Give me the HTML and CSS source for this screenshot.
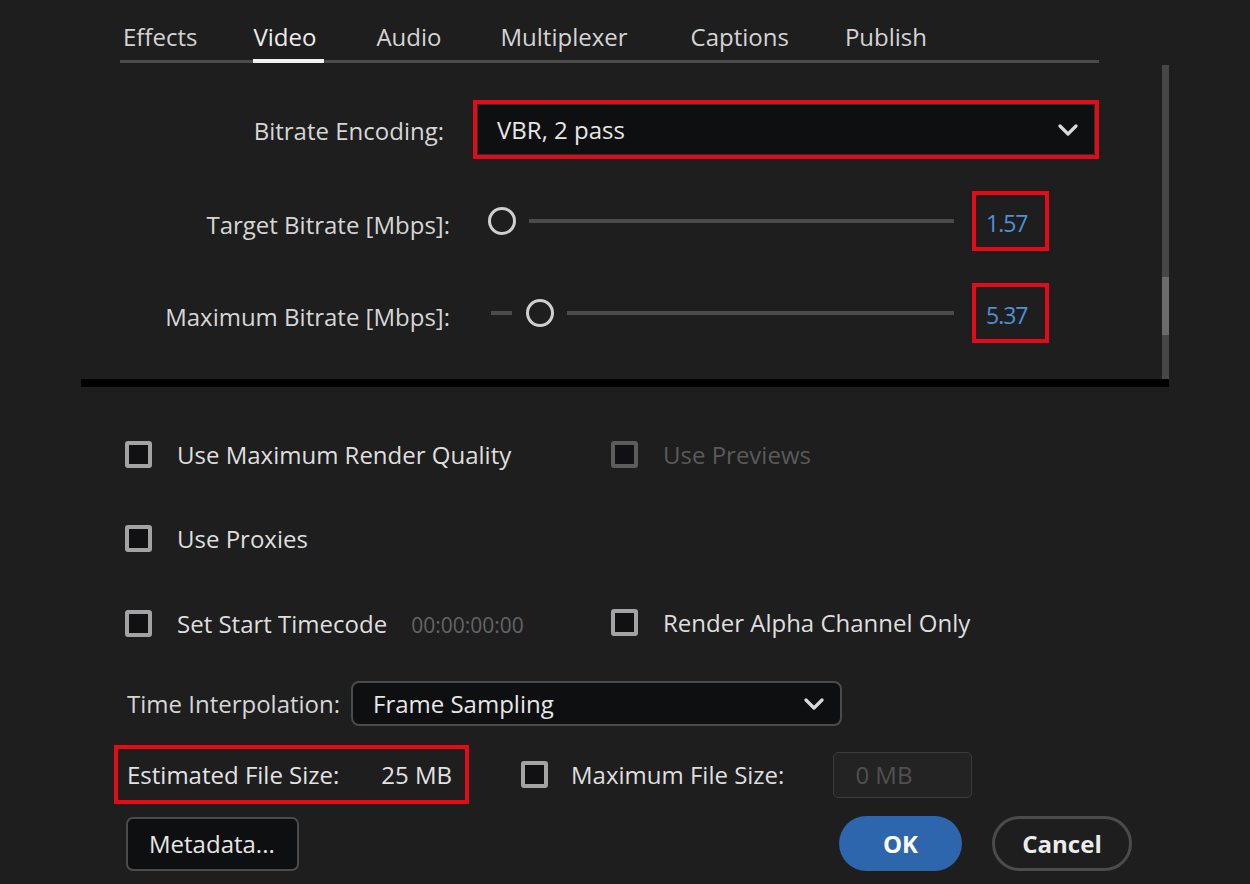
FILE: index.html
```html
<!DOCTYPE html>
<html lang="en">
<head>
<meta charset="utf-8">
<title>Export Settings - Video</title>
<link rel="stylesheet" href="styles.css">
</head>
<body>
<div class="dialog">
  <nav class="tabs">
    <span class="tab">Effects</span>
    <span class="tab active">Video</span>
    <span class="tab">Audio</span>
    <span class="tab">Multiplexer</span>
    <span class="tab">Captions</span>
    <span class="tab">Publish</span>
  </nav>

  <section class="panel">
    <div class="panel-body">
      <div class="row row-enc">
        <span class="lbl lbl-enc">Bitrate Encoding:</span>
        <div class="hl hl-enc">
          <div class="select select-enc">
            <span>VBR, 2 pass</span>
            <svg class="chev" width="20" height="12" viewBox="0 0 20 12"><polyline points="2,2 10,10 18,2" fill="none" stroke="#d9d9d9" stroke-width="3.2" stroke-linecap="round" stroke-linejoin="round"/></svg>
          </div>
        </div>
      </div>

      <div class="row row-slider">
        <span class="lbl">Target Bitrate [Mbps]:</span>
        <div class="slider">
          <span class="knob"></span>
          <span class="track"></span>
        </div>
        <div class="hl hl-val"><span class="val">1.57</span></div>
      </div>

      <div class="row row-slider">
        <span class="lbl">Maximum Bitrate [Mbps]:</span>
        <div class="slider slider-max">
          <span class="track track-left"></span>
          <span class="knob"></span>
          <span class="track"></span>
        </div>
        <div class="hl hl-val"><span class="val">5.37</span></div>
      </div>
    </div>
    <div class="scrollbar"><div class="thumb"></div></div>
  </section>

  <section class="options">
    <label class="check"><span class="box"></span><span>Use Maximum Render Quality</span></label>
    <label class="check disabled"><span class="box"></span><span>Use Previews</span></label>
    <label class="check"><span class="box"></span><span>Use Proxies</span></label>
    <span></span>
    <div class="check-line">
      <label class="check"><span class="box"></span><span>Set Start Timecode</span></label>
      <span class="timecode">00:00:00:00</span>
    </div>
    <label class="check"><span class="box"></span><span>Render Alpha Channel Only</span></label>
  </section>

  <div class="interp">
    <span class="interp-lbl">Time Interpolation:</span>
    <div class="select select-interp">
      <span>Frame Sampling</span>
      <svg class="chev" width="20" height="12" viewBox="0 0 20 12"><polyline points="2,2 10,10 18,2" fill="none" stroke="#d9d9d9" stroke-width="3.2" stroke-linecap="round" stroke-linejoin="round"/></svg>
    </div>
  </div>

  <div class="size-row">
    <div class="hl hl-size">
      <span>Estimated File Size:</span>
      <span>25 MB</span>
    </div>
    <label class="check check-max"><span class="box"></span><span>Maximum File Size:</span></label>
    <div class="mb-input">0 MB</div>
  </div>

  <div class="buttons">
    <button class="btn btn-meta">Metadata...</button>
    <div class="btn-group">
      <button class="btn btn-ok">OK</button>
      <button class="btn btn-cancel">Cancel</button>
    </div>
  </div>
</div>
</body>
</html>
```

FILE: styles.css
```css
* { box-sizing: border-box; }

html, body {
  margin: 0;
  padding: 0;
  background: #1e1e1e;
}

body {
  width: 1250px;
  height: 884px;
  overflow: hidden;
  font-family: "Open Sans", "Noto Sans", sans-serif;
  font-size: 24px;
  color: #dcdcdc;
}

.dialog {
  display: flex;
  flex-direction: column;
}

/* Tabs */
.tabs {
  display: flex;
  align-items: flex-end;
  margin-left: 120px;
  width: 979px;
  height: 63px;
  padding: 21px 0 0 3px;
  box-shadow: inset 0 -3px 0 #4b4b4b;
}

.tab {
  line-height: 32px;
  padding: 0 8px 6px 0;
  border-bottom: 4px solid transparent;
  color: #d4d4d4;
  white-space: nowrap;
}

.tab:nth-child(1) { margin-right: 48px; }
.tab:nth-child(2) { margin-right: 52px; }
.tab:nth-child(3) { margin-right: 51px; }
.tab:nth-child(4) { margin-right: 55px; }
.tab:nth-child(5) { margin-right: 48px; }

.tab.active {
  border-bottom-color: #f2f2f2;
  color: #ececec;
}

/* Scrolling panel */
.panel {
  display: flex;
  margin: 2px 0 0 81px;
  width: 1088px;
  height: 322px;
  border-bottom: 8px solid #000;
}

.panel-body {
  flex: 1;
  display: flex;
  flex-direction: column;
  padding-top: 35px;
}

.scrollbar {
  width: 7px;
  background: #474747;
  display: flex;
  flex-direction: column;
  padding-top: 212px;
}

.thumb {
  height: 58px;
  background: #6b6b6b;
}

.row {
  display: flex;
  align-items: center;
}

.row-enc { height: 59px; }

.row-slider {
  height: 60px;
  margin-top: 32px;
}

.lbl {
  width: 369px;
  text-align: right;
  color: #d6d6d6;
  white-space: nowrap;
}

.row-slider .lbl {
  padding-top: 6px;
}

.lbl-enc {
  width: 363px;
  margin-right: 29px;
  padding-top: 1px;
}

.hl {
  border: 4px solid #e30b17;
}

.hl-enc {
  width: 626px;
  height: 59px;
  display: flex;
}

.select {
  display: flex;
  align-items: center;
  justify-content: space-between;
  background: #0e0f11;
  color: #e6e6e6;
}

.select-enc {
  flex: 1;
  border: 1px solid #303030;
  border-radius: 3px;
  padding: 0 16px 0 19px;
}

.slider {
  width: 466px;
  margin-left: 38px;
  display: flex;
  align-items: center;
  gap: 13px;
}

.slider-max {
  margin-left: 41px;
  width: 463px;
}

.knob {
  width: 28px;
  height: 28px;
  border: 3px solid #cfcfcf;
  border-radius: 50%;
  flex: none;
}

.track {
  flex: 1;
  height: 4px;
  background: #4b4b4b;
}

.track-left {
  flex: none;
  width: 21px;
  margin-right: 1px;
}

.hl-val {
  width: 77px;
  height: 60px;
  margin-left: 18px;
  display: flex;
  align-items: center;
  padding: 3px 0 0 10px;
}

.val {
  color: #4f90d8;
  font-size: 23px;
  letter-spacing: -1px;
}

/* Options */
.options {
  display: grid;
  grid-template-columns: 486px auto;
  row-gap: 56px;
  margin: 53px 0 0 125px;
}

.check {
  display: flex;
  align-items: center;
  gap: 25px;
  height: 28px;
  color: #dedede;
  white-space: nowrap;
}

.box {
  width: 27px;
  height: 27px;
  border: 4px solid #a3a3a3;
  border-radius: 3px;
  background: #111113;
  flex: none;
}

.check.disabled { color: #5a5a5a; }
.check.disabled .box { border-color: #5c5c5c; }

.check-line {
  display: flex;
  align-items: center;
  gap: 24px;
}

.timecode {
  color: #62646a;
  font-size: 21px;
  padding-top: 3px;
}

/* Time interpolation */
.interp {
  display: flex;
  align-items: center;
  margin: 42px 0 0 127px;
}

.interp-lbl {
  width: 224px;
  color: #d6d6d6;
  white-space: nowrap;
}

.select-interp {
  width: 491px;
  height: 45px;
  border: 2px solid #4b4b4b;
  border-radius: 8px;
  padding: 0 16px 0 20px;
}

/* File size */
.size-row {
  display: flex;
  align-items: center;
  margin: 19px 0 0 114px;
}

.hl-size {
  width: 355px;
  height: 59px;
  display: flex;
  align-items: center;
  justify-content: space-between;
  padding: 0 13px 0 9px;
  color: #e2e2e2;
  white-space: nowrap;
}

.check-max {
  margin-left: 52px;
  gap: 23px;
}

.mb-input {
  margin-left: 49px;
  width: 139px;
  height: 46px;
  border: 1px solid #3c3c3c;
  border-radius: 5px;
  background: #232323;
  color: #505050;
  display: flex;
  align-items: center;
  padding-left: 21px;
}

/* Buttons */
.buttons {
  display: flex;
  align-items: center;
  justify-content: space-between;
  margin: 12px 0 0 126px;
  width: 1006px;
}

.btn {
  font-family: inherit;
  font-size: 24px;
  height: 55px;
  cursor: pointer;
}

.btn-meta {
  width: 173px;
  height: 54px;
  background: #0e0f11;
  border: 2px solid #4b4b4b;
  border-radius: 7px;
  color: #e6e6e6;
  text-align: left;
  padding: 0 0 0 21px;
  white-space: nowrap;
}

.btn-group {
  display: flex;
  gap: 30px;
}

.btn-ok {
  width: 123px;
  border: none;
  border-radius: 28px;
  background: #2d66ad;
  color: #ffffff;
  font-weight: 700;
}

.btn-cancel {
  width: 140px;
  border: 3px solid #4b4b4b;
  border-radius: 28px;
  background: transparent;
  color: #ececec;
  font-weight: 700;
}
```
